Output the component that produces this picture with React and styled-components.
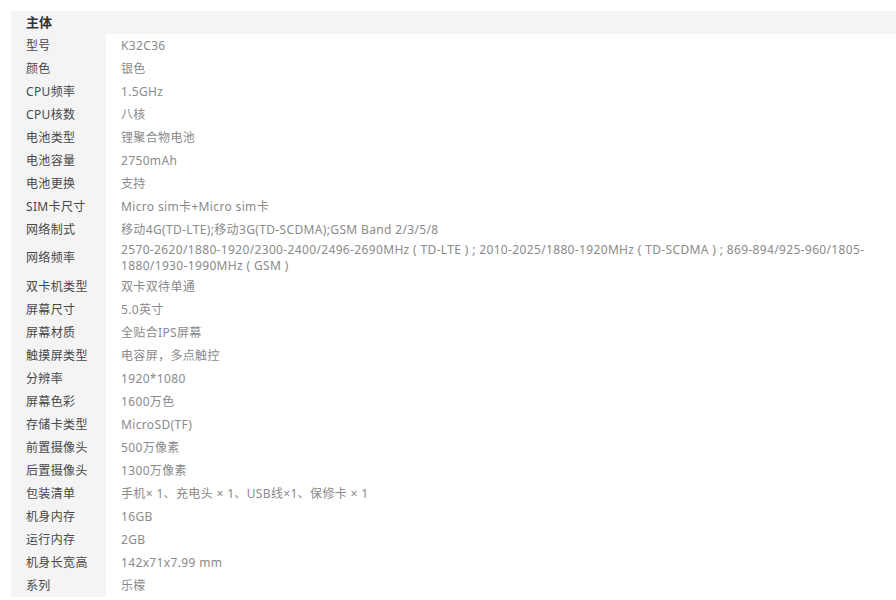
import styled, { createGlobalStyle } from "styled-components";

const GlobalStyle = createGlobalStyle`
  html, body {
    margin: 0;
    padding: 0;
    overflow: hidden;
    background: #fff;
  }
`;

const Wrapper = styled.div`
  padding: 11px 0 0 11px;
  font-family: "Noto Sans", "Noto Sans CJK SC", sans-serif;
  font-size: 12px;
  letter-spacing: 0.35px;
`;

const SpecTable = styled.table`
  width: 900px;
  border-collapse: collapse;
  border-spacing: 0;
  table-layout: fixed;
`;

const LabelCol = styled.col`
  width: 95px;
`;

const GroupTitle = styled.th`
  background: #f4f4f4;
  color: #333;
  font-size: 13px;
  font-weight: bold;
  letter-spacing: 0;
  text-align: left;
  height: 23px;
  padding: 0 0 0 15px;
  line-height: 23px;
  box-sizing: border-box;
`;

const Label = styled.td`
  background: #f4f4f4;
  color: #484848;
  height: 21px;
  padding: 1px 0 1px 15px;
  line-height: 16px;
  vertical-align: middle;
  white-space: nowrap;
`;

const Value = styled.td`
  color: #8a8a8a;
  height: 21px;
  padding: 1px 20px 1px 15px;
  line-height: 16px;
  vertical-align: middle;
`;

const specs = [
  ["型号", "K32C36"],
  ["颜色", "银色"],
  ["CPU频率", "1.5GHz"],
  ["CPU核数", "八核"],
  ["电池类型", "锂聚合物电池"],
  ["电池容量", "2750mAh"],
  ["电池更换", "支持"],
  ["SIM卡尺寸", "Micro sim卡+Micro sim卡"],
  ["网络制式", "移动4G(TD-LTE);移动3G(TD-SCDMA);GSM Band 2/3/5/8"],
  [
    "网络频率",
    "2570-2620/1880-1920/2300-2400/2496-2690MHz ( TD-LTE ) ; 2010-2025/1880-1920MHz ( TD-SCDMA )  ; 869-894/925-960/1805-1880/1930-1990MHz ( GSM )",
  ],
  ["双卡机类型", "双卡双待单通"],
  ["屏幕尺寸", "5.0英寸"],
  ["屏幕材质", "全贴合IPS屏幕"],
  ["触摸屏类型", "电容屏，多点触控"],
  ["分辨率", "1920*1080"],
  ["屏幕色彩", "1600万色"],
  ["存储卡类型", "MicroSD(TF)"],
  ["前置摄像头", "500万像素"],
  ["后置摄像头", "1300万像素"],
  ["包装清单", "手机× 1、充电头 × 1、USB线×1、保修卡 × 1"],
  ["机身内存", "16GB"],
  ["运行内存", "2GB"],
  ["机身长宽高", "142x71x7.99 mm"],
  ["系列", "乐檬"],
];

const App = () => {
  return (
    <Wrapper>
      <GlobalStyle />
      <SpecTable>
        <colgroup>
          <LabelCol />
          <col />
        </colgroup>
        <thead>
          <tr>
            <GroupTitle colSpan={2}>主体</GroupTitle>
          </tr>
        </thead>
        <tbody>
          {specs.map(([label, value]) => (
            <tr key={label}>
              <Label>{label}</Label>
              <Value>{value}</Value>
            </tr>
          ))}
        </tbody>
      </SpecTable>
    </Wrapper>
  );
};

export default App;
